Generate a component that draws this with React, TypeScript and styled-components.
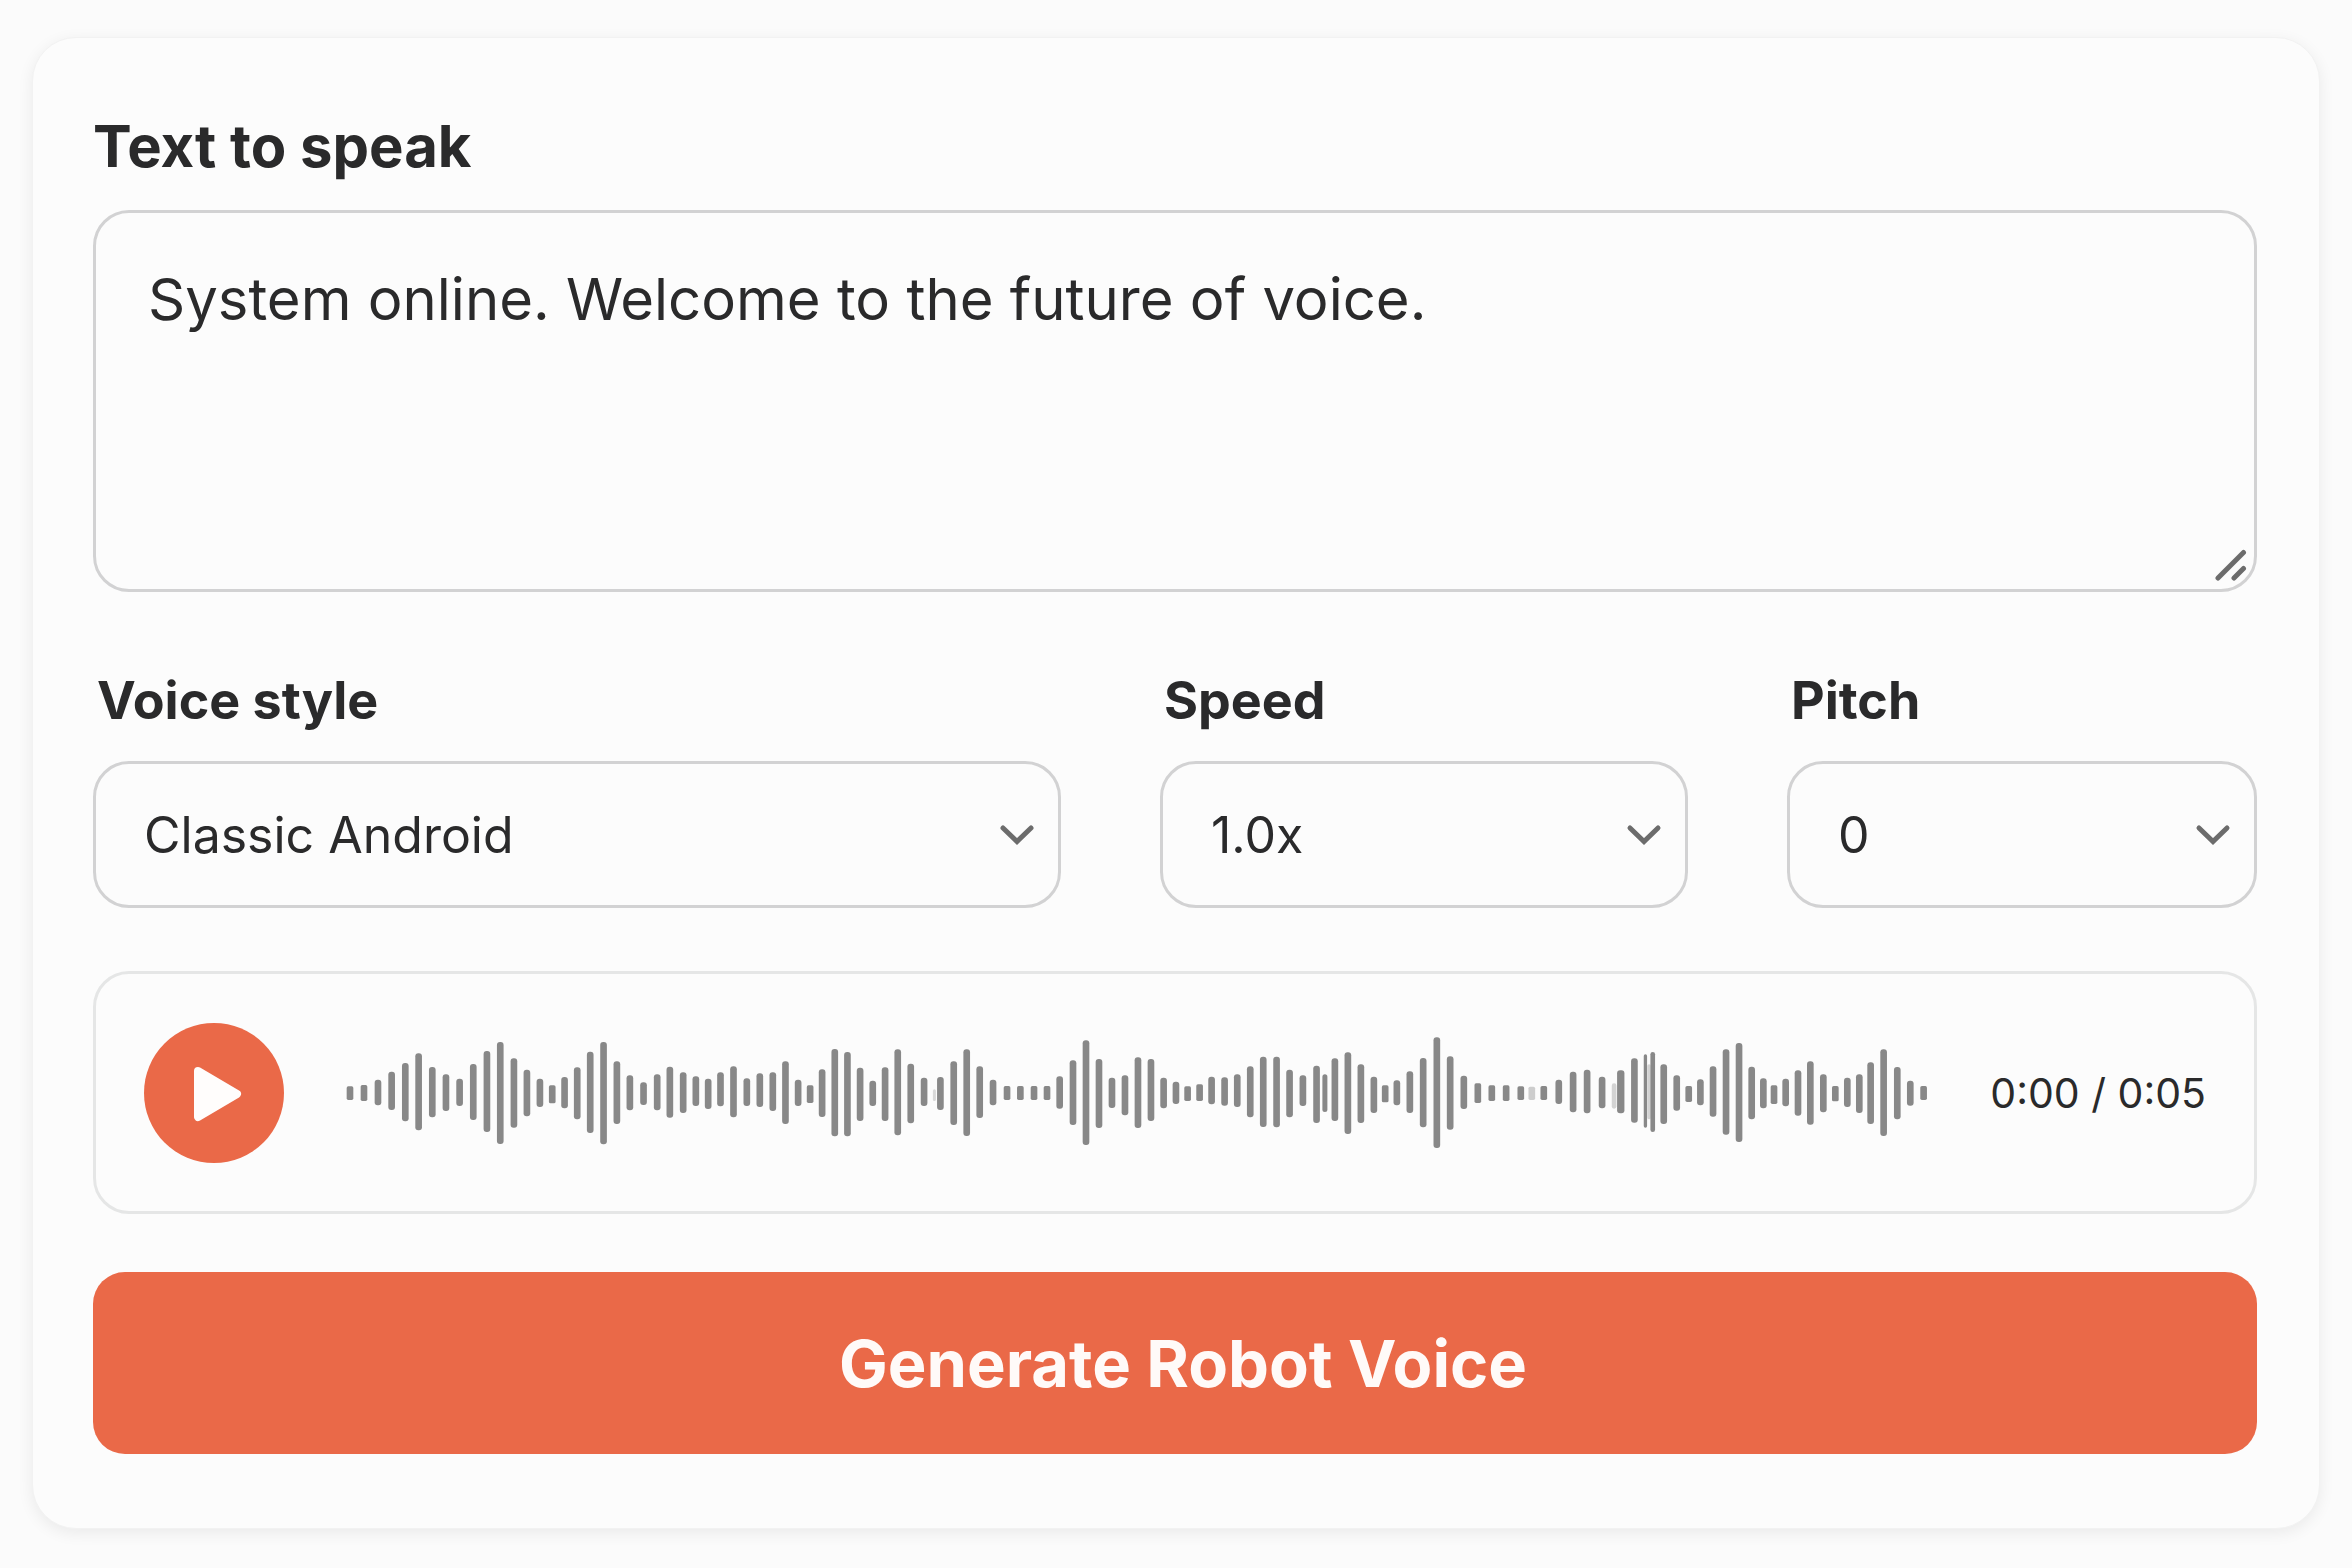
import React, { useState } from "react";
import styled, { createGlobalStyle } from "styled-components";

const color = {
  page: "#fbfbfb",
  card: "#fcfcfc",
  text: "#2a2a2b",
  line: "#d2d2d3",
  softLine: "#e5e6e6",
  accent: "#ea6948",
  icon: "#6c6c6c",
  wave: "#888888",
};

const GlobalStyle = createGlobalStyle`
  *, *::before, *::after { box-sizing: border-box; }
  body {
    margin: 0;
    background: ${color.page};
    color: ${color.text};
    font-family: Inter, "Liberation Sans", sans-serif;
  }
  button, select, textarea { font-family: inherit; color: inherit; }
`;

const Page = styled.main`
  padding: 37px 32px 39px;
`;

const Card = styled.form`
  display: flex;
  flex-direction: column;
  padding: 72px 62px 74px 60px;
  border: 1px solid #f2f2f2;
  border-radius: 44px;
  background: ${color.card};
  box-shadow: 0 4px 16px rgba(0, 0, 0, 0.07);
`;

const Field = styled.div`
  display: flex;
  flex-direction: column;
  gap: 28px;
  min-width: 0;
`;

const Label = styled.label<{ $large?: boolean }>`
  padding-left: ${(p) => (p.$large ? 0 : 4)}px;
  font-size: ${(p) => (p.$large ? 58 : 52)}px;
  line-height: ${(p) => (p.$large ? 72 : 64)}px;
  font-weight: 700;
`;

const Control = styled.div`
  position: relative;
  display: flex;
`;

const TextBox = styled.textarea`
  flex: 1;
  min-width: 0;
  height: 382px;
  padding: 50px 52px;
  border: 3px solid ${color.line};
  border-radius: 36px;
  background: transparent;
  font-size: 58px;
  line-height: 72px;
  resize: none;
  outline: none;
`;

const Grip = styled.svg`
  position: absolute;
  right: 10px;
  bottom: 11px;
  width: 32px;
  height: 32px;
  pointer-events: none;
`;

const Options = styled.div`
  display: grid;
  grid-template-columns: 968fr 528fr 470fr;
  gap: 99px;
  margin-top: 77px;
`;

const Select = styled.select`
  flex: 1;
  min-width: 0;
  height: 147px;
  padding: 0 80px 0 48px;
  border: 3px solid ${color.line};
  border-radius: 36px;
  background: transparent;
  font-size: 50px;
  appearance: none;
  outline: none;
`;

const Chevron = styled.svg`
  position: absolute;
  right: 26px;
  top: 50%;
  width: 36px;
  height: 24px;
  margin-top: -12px;
  pointer-events: none;
`;

const Player = styled.div`
  display: flex;
  align-items: center;
  gap: 62px;
  height: 243px;
  margin-top: 63px;
  padding: 0 48px;
  border: 3px solid ${color.softLine};
  border-radius: 36px;
`;

const PlayButton = styled.button`
  display: flex;
  flex: none;
  align-items: center;
  justify-content: center;
  width: 140px;
  height: 140px;
  padding: 0;
  border: 0;
  border-radius: 50%;
  background: ${color.accent};
  cursor: pointer;
`;

const PlayIcon = styled.svg`
  width: 140px;
  height: 140px;
`;

const Wave = styled.svg`
  flex: 1;
  min-width: 0;
  height: 126px;
`;

const Time = styled.span`
  flex: none;
  font-size: 41px;
  white-space: nowrap;
`;

const Submit = styled.button`
  height: 182px;
  margin-top: 58px;
  padding: 0 32px 0 48px;
  border: 0;
  border-radius: 32px;
  background: ${color.accent};
  && { color: #fffaf8; }
  font-size: 65px;
  font-weight: 700;
  cursor: pointer;
`;

/* Each bar: centre x, top, bottom, then optional width and opacity. */
const bars: number[][] = [
  [12, 231, 272], [54, 227, 275], [96, 211, 288], [137, 187, 302], [178, 161, 336],
  [218, 132, 363], [259, 173, 324], [300, 195, 305], [341, 208, 290], [382, 164, 332],
  [423, 125, 368], [463, 98, 404], [504, 147, 355], [543, 181, 321], [582, 208, 293],
  [619, 228, 282], [656, 203, 297], [694, 174, 330], [733, 127, 371], [773, 98, 405],
  [813, 156, 344], [852, 198, 303], [893, 219, 287], [934, 195, 303], [972, 172, 325],
  [1012, 189, 311], [1050, 201, 290], [1087, 208, 299], [1124, 189, 291], [1163, 171, 324],
  [1203, 207, 290], [1242, 192, 293], [1281, 189, 305], [1319, 156, 344], [1357, 211, 290],
  [1393, 228, 281], [1429, 180, 323], [1467, 119, 381], [1505, 128, 381], [1543, 175, 335],
  [1581, 214, 290], [1618, 174, 335], [1656, 120, 378], [1695, 163, 342], [1735, 205, 290],
  [1766, 240, 275, 9, 0.3], [1784, 203, 302], [1824, 156, 347], [1863, 120, 380],
  [1902, 171, 326], [1942, 211, 288], [1984, 230, 272], [2024, 230, 272], [2065, 230, 272],
  [2104, 230, 272], [2142, 201, 298], [2182, 153, 347], [2221, 93, 407], [2260, 149, 356],
  [2299, 205, 296], [2338, 198, 318], [2377, 144, 356], [2416, 149, 335], [2454, 205, 297],
  [2491, 217, 284], [2526, 231, 275], [2562, 225, 275], [2598, 202, 285], [2637, 204, 289],
  [2675, 195, 293], [2714, 171, 324], [2753, 142, 353], [2793, 142, 354], [2832, 181, 324],
  [2872, 198, 290], [2913, 169, 341], [2938, 195, 308, 15], [2968, 147, 335],
  [3007, 129, 374], [3046, 165, 341], [3085, 202, 311], [3119, 228, 279], [3154, 213, 288],
  [3193, 186, 311], [3233, 146, 354], [3274, 84, 416], [3314, 141, 361], [3355, 199, 299],
  [3397, 222, 281], [3439, 228, 275], [3482, 228, 275], [3526, 231, 272],
  [3559, 232, 272, 20, 0.4], [3595, 230, 272], [3640, 211, 284], [3683, 187, 309],
  [3725, 181, 312], [3770, 202, 297], [3806, 222, 298, 14, 0.35], [3826, 183, 312, 22],
  [3867, 147, 340], [3900, 135, 355, 10], [3911, 165, 330, 10, 0.35], [3922, 128, 368, 14],
  [3955, 165, 344], [3994, 198, 304], [4030, 230, 278], [4065, 210, 288], [4103, 171, 322],
  [4142, 120, 376], [4181, 101, 398], [4219, 172, 330], [4254, 207, 297], [4286, 228, 284],
  [4321, 208, 291], [4358, 183, 319], [4395, 156, 346], [4434, 195, 309], [4470, 230, 276],
  [4506, 205, 293], [4542, 195, 311], [4576, 159, 344], [4615, 120, 380], [4656, 173, 330],
  [4695, 214, 289], [4735, 230, 272],
];

type OptionFieldProps = { id: string; label: string; options: string[]; initial: string };

function OptionField({ id, label, options, initial }: OptionFieldProps) {
  const [value, setValue] = useState(initial);
  return (
    <Field>
      <Label htmlFor={id}>{label}</Label>
      <Control>
        <Select id={id} value={value} onChange={(e) => setValue(e.target.value)}>
          {options.map((o) => (
            <option key={o}>{o}</option>
          ))}
        </Select>
        <Chevron viewBox="0 0 36 24" fill="none" aria-hidden="true">
          <path d="M4 5 18 18.5 32 5" stroke={color.icon} strokeWidth="5" strokeLinecap="round" />
        </Chevron>
      </Control>
    </Field>
  );
}

export default function App() {
  const [text, setText] = useState("System online. Welcome to the future of voice.");
  return (
    <>
      <GlobalStyle />
      <Page>
        <Card onSubmit={(e) => e.preventDefault()}>
          <Field>
            <Label htmlFor="text" $large>
              Text to speak
            </Label>
            <Control>
              <TextBox id="text" spellCheck={false} value={text} onChange={(e) => setText(e.target.value)} />
              <Grip viewBox="0 0 32 32" fill="none" stroke={color.icon} strokeWidth="5" strokeLinecap="round" aria-hidden="true">
                <path d="M3 29 28.5 3.5M19 29 28.5 19.5" />
              </Grip>
            </Control>
          </Field>

          <Options>
            <OptionField id="voice" label="Voice style" initial="Classic Android" options={["Classic Android"]} />
            <OptionField id="speed" label="Speed" initial="1.0x" options={["1.0x"]} />
            <OptionField id="pitch" label="Pitch" initial="0" options={["0"]} />
          </Options>

          <Player>
            <PlayButton type="button" aria-label="Play">
              <PlayIcon viewBox="0 0 140 140" aria-hidden="true">
                <path
                  d="M54 48 93 71 54 94Z"
                  fill="#fffdfc"
                  stroke="#fffdfc"
                  strokeWidth="8"
                  strokeLinejoin="round"
                />
              </PlayIcon>
            </PlayButton>
            <Wave viewBox="0 62 4749 378" preserveAspectRatio="none" fill={color.wave} aria-hidden="true">
              {bars.map(([x, top, bottom, width = 20, opacity = 1]) => (
                <rect
                  key={x}
                  x={x - width / 2}
                  y={top}
                  width={width}
                  height={bottom - top}
                  rx={Math.min(width / 2, bottom - top < 60 ? 5 : 9)}
                  opacity={opacity}
                />
              ))}
            </Wave>
            <Time>0:00 / 0:05</Time>
          </Player>

          <Submit type="submit">Generate Robot Voice</Submit>
        </Card>
      </Page>
    </>
  );
}
